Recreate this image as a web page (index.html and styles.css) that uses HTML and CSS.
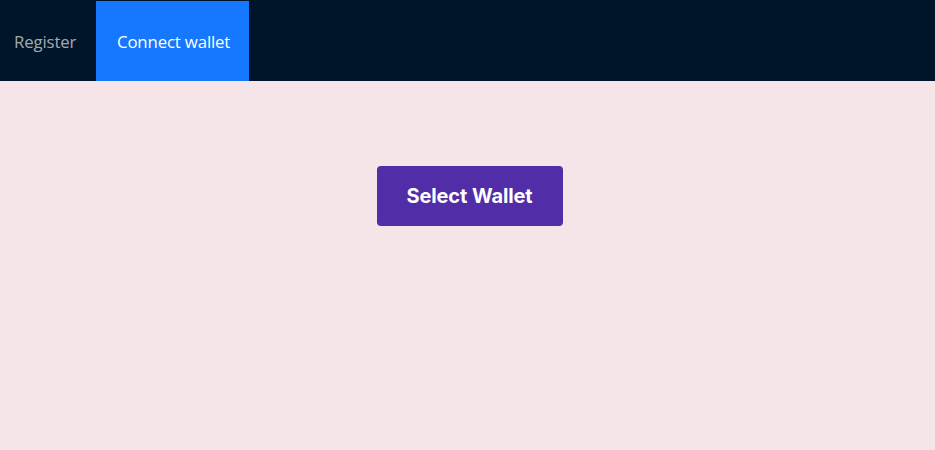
FILE: index.html
```html
<!DOCTYPE html>
<html>
<head>
<meta charset="utf-8">
<link rel="stylesheet" href="styles.css">
</head>
<body>
<header class="header">
  <nav class="menu">
    <a class="item">Register</a>
    <a class="item active">Connect wallet</a>
  </nav>
</header>
<main class="main">
  <button class="wallet-btn">Select Wallet</button>
</main>
</body>
</html>
```
FILE: styles.css
```css
html, body { margin: 0; padding: 0; }
body {
  background: #f5e5e9;
  font-family: "Open Sans", "Noto Sans", sans-serif;
  min-height: 450px;
}
.header {
  background: #001529;
  height: 80px;
  border-top: 1px solid #001529;
}
.menu { display: flex; height: 80px; padding-left: 0; }
.item {
  display: flex;
  align-items: center;
  box-sizing: border-box;
  width: 96px;
  padding: 0 0 0 14px;
  color: rgba(255,255,255,0.65);
  font-size: 16.8px;
  letter-spacing: -0.15px;
}
.item.active {
  background: #1677ff;
  color: #fff;
  width: 153px;
  padding-left: 21px;
}
.main {
  display: flex;
  justify-content: center;
  padding-top: 85px;
  padding-left: 4px;
}
.wallet-btn {
  background: #512da8;
  color: #fff;
  border: none;
  border-radius: 4px;
  height: 60px;
  width: 186px;
  font-family: "Inter", "DejaVu Sans", sans-serif;
  font-weight: 700;
  font-size: 20px;
  letter-spacing: -0.1px;
}
```
